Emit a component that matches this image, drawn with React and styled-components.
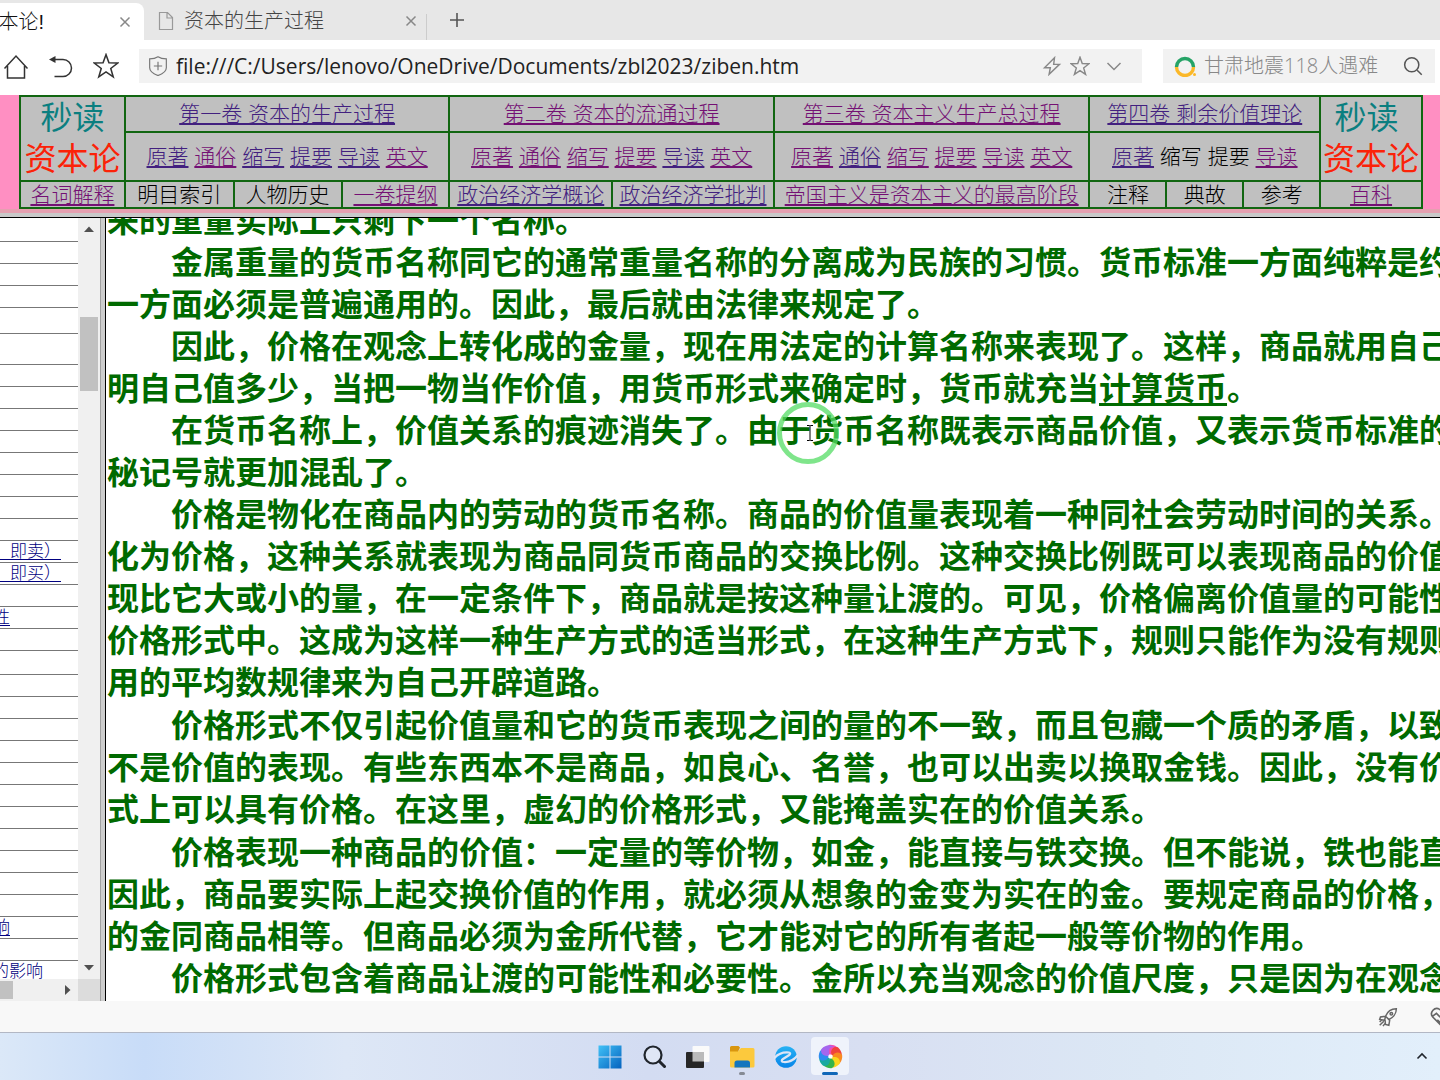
import React from 'react';
import styled, { createGlobalStyle } from 'styled-components';

const sans = `'Liberation Sans', 'Noto Sans CJK SC', sans-serif`;
const cjk = `'Noto Sans CJK SC', sans-serif`;

const GlobalStyle = createGlobalStyle`
    * {
        box-sizing: border-box;
    }

    body {
        margin: 0;
        overflow: hidden;
        font-family: ${sans};
    }

    button {
        border: none;
        background: none;
        padding: 0;
        cursor: pointer;
    }

    svg {
        display: block;
        flex-shrink: 0;
    }
`

const Window = styled.div`
    display: flex;
    flex-direction: column;
    height: 100vh;
    background-color: #fff;
`

/* tabs */

const TabStrip = styled.div`
    display: flex;
    height: 40px;
    flex-shrink: 0;
    background-color: #e7e7e7;
`

const Tab = styled.div`
    display: flex;
    align-items: center;
    justify-content: ${({ $active }) => $active ? 'flex-end' : 'flex-start'};
    width: ${({ $active }) => $active ? '144px' : '282px'};
    margin-top: ${({ $active }) => $active ? '3px' : '1px'};
    padding: ${({ $active }) => $active ? '0 12px' : '0 8px 0 12px'};
    background-color: ${({ $active }) => $active ? '#fff' : 'transparent'};
    border-radius: 0 8px 0 0;
    overflow: hidden;
    color: #999;
`

const Divider = styled.span`
    width: 1px;
    height: 26px;
    margin-top: 14px;
    background-color: #ccc;
`

const TabTitle = styled.span`
    flex: ${({ $grow }) => $grow ? '1' : 'none'};
    margin: ${({ $grow }) => $grow ? '0 0 0 8px' : '0 74px 0 0'};
    font-family: ${sans};
    font-size: 20px;
    font-weight: 300;
    line-height: 30px;
    white-space: nowrap;
    color: ${({ $grow }) => $grow ? '#444' : '#111'};
`

const IconButton = styled.button`
    display: flex;
    align-items: center;
    justify-content: center;
    width: ${({ $size }) => $size || 20}px;
    height: ${({ $size }) => $size || 20}px;
    flex-shrink: 0;
    color: ${({ $color }) => $color || '#888'};
`

const NewTab = styled(IconButton)`
    margin: 4px 0 0 14px;
`

/* toolbar */

const Toolbar = styled.div`
    display: flex;
    align-items: center;
    height: 55px;
    flex-shrink: 0;
    padding: 0 5px 4px 0;
    background-color: #fff;
`

const NavButtons = styled.div`
    display: flex;
    gap: 13px;
    width: 139px;
    flex-shrink: 0;
`

const Field = styled.label`
    display: flex;
    align-items: center;
    flex: ${({ $grow }) => $grow ? '1' : '0 0 272px'};
    min-width: 0;
    gap: 8px;
    height: 34px;
    margin-left: ${({ $grow }) => $grow ? '0' : '21px'};
    padding: 0 12px 0 ${({ $grow }) => $grow ? '9px' : '11px'};
    background-color: #f2f2f2;
`

const Input = styled.input`
    flex: 1;
    width: 0;
    min-width: 0;
    padding: 0;
    border: none;
    outline: none;
    background: none;
    font-family: 'Open Sans', 'Noto Sans CJK SC', sans-serif;
    font-size: ${({ $size }) => $size}px;
    font-weight: ${({ $size }) => $size < 21 ? '300' : '400'};
    line-height: 30px;
    color: #222;

    &::placeholder {
        color: #888;
        opacity: 1;
    }
`

/* top frame */

const TopFrame = styled.header`
    flex-shrink: 0;
    padding: 0 17px 0 19px;
    background-color: #ff8fc2;
    border-bottom: 4px solid #e5a0b0;
`

const Split = styled.div`
    height: 5px;
    flex-shrink: 0;
    background-color: #c9c9c9;
    border-bottom: 1px solid #000;
`

const Menu = styled.table`
    width: 100%;
    table-layout: fixed;
    border-collapse: collapse;
    background-color: #c0c0c0;
`

const Cell = styled.td`
    height: ${({ $height }) => $height}px;
    padding: 0;
    border: 2px solid #116611;
    font-size: 21px;
    font-weight: 300;
    line-height: 24px;
    text-align: center;
    white-space: nowrap;
    color: #000;
`

const Brand = styled.div`
    font-size: 32px;
    font-weight: 400;
    line-height: 41px;
    color: ${({ $color }) => $color};
`

const MenuLink = styled.a`
    color: ${({ $fresh }) => $fresh ? '#42207f' : '#741074'};
    text-decoration: underline;
    text-decoration-thickness: 2px;
    text-underline-offset: 2px;
`

/* frames */

const Frames = styled.div`
    display: flex;
    flex: 1;
    min-height: 0;
`

const Sidebar = styled.nav`
    display: grid;
    grid-template-columns: 78px 22px;
    grid-template-rows: minmax(0, 1fr) 22px;
    flex-shrink: 0;
`

const Outline = styled.ul`
    margin: 0;
    padding: 0;
    overflow: hidden;
    list-style: none;
`

const OutlineRow = styled.li`
    display: flex;
    align-items: flex-start;
    justify-content: flex-end;
    height: ${({ $height }) => $height}px;
    padding-right: ${({ $end }) => $end}px;
    border-bottom: 1px solid #777;
`

const OutlineLink = styled.a`
    flex-shrink: 0;
    font-family: ${cjk};
    font-size: 17px;
    font-weight: 300;
    line-height: 18px;
    white-space: pre;
    color: #000080;
    text-decoration: ${({ $plain }) => $plain ? 'none' : 'underline'};
    text-underline-offset: 2px;
`

const VTrack = styled.div`
    display: flex;
    flex-direction: column;
    align-items: center;
    justify-content: space-between;
    padding: 8px 0;
    background-color: #f0f0f0;
    color: #505050;
`

const VThumb = styled.div`
    width: 18px;
    height: 74px;
    margin: 85px 0 auto;
    background-color: #c1c1c1;
`

const HTrack = styled.div`
    display: flex;
    align-items: center;
    justify-content: space-between;
    padding-right: 7px;
    background-color: #f0f0f0;
    color: #505050;
`

const HThumb = styled.div`
    width: 13px;
    height: 18px;
    background-color: #c1c1c1;
`

const Corner = styled.div`
    background-color: #dcdcdc;
`

const Sash = styled.div`
    width: 6px;
    flex-shrink: 0;
    background-color: #cdcdcd;
    border-left: 1px solid #a0a0a0;
    border-right: 1px solid #000;
`

const Article = styled.main`
    position: relative;
    flex: 1;
    min-width: 0;
    overflow: hidden;
    padding-left: 1px;
`

const Chapter = styled.section`
    margin-top: ${({ $first }) => $first ? '-21px' : '1px'};
`

const Paragraph = styled.p`
    margin: 0;
    font-family: ${cjk};
    font-size: 32px;
    font-weight: bold;
    line-height: 42px;
    white-space: nowrap;
    text-indent: ${({ $cont }) => $cont ? '0' : '64px'};
    color: #006a00;

    u {
        text-decoration-thickness: 3px;
        text-underline-offset: 3px;
    }
`

const Pointer = styled.div`
    position: absolute;
    top: 184px;
    left: 671px;
    width: 62px;
    height: 62px;
    display: flex;
    align-items: center;
    justify-content: center;
    padding-left: 4px;
    border: 5px solid rgba(84, 220, 100, .75);
    border-radius: 50%;
`

/* bottom */

const StatusBar = styled.footer`
    display: flex;
    align-items: center;
    justify-content: flex-end;
    gap: 32px;
    height: 32px;
    flex-shrink: 0;
    overflow: hidden;
    background-color: #f8f8f8;
    border-bottom: 1px solid #b2b7c4;
    color: #666;
`

const Clipped = styled.div`
    width: 10px;
    overflow: hidden;
`

const Taskbar = styled.div`
    display: grid;
    grid-template-columns: 1fr auto 1fr;
    align-items: center;
    height: 47px;
    flex-shrink: 0;
    padding-bottom: 2px;
    background: linear-gradient(90deg, #dbe8f8 0%, #c8dcf8 10%, #dde7f6 24%, #d3dcf2 45%, #d8dff2 60%, #dce8f5 80%, #e2effb 100%);
`

const Apps = styled.div`
    display: flex;
    grid-column: 2;
    gap: 6px;
`

const AppButton = styled.button`
    display: flex;
    flex-direction: column;
    align-items: center;
    justify-content: flex-end;
    gap: 3px;
    width: 38px;
    height: 38px;
    border-radius: 4px;
    background-color: ${({ $active }) => $active ? '#eff3fb' : 'transparent'};

    &::after {
        content: '';
        width: ${({ $active }) => $active ? '16px' : '6px'};
        height: 3px;
        border-radius: 2px;
        background-color: ${({ $active, $open }) => $active ? '#1067b8' : $open ? '#858a94' : 'transparent'};
    }
`

const Tray = styled.div`
    display: flex;
    justify-content: flex-end;
    padding-right: 8px;
`

const Line = ({ size = 20, box = 24, w = 1.5, children }) => (
    <svg width={size} height={size} viewBox={`0 0 ${box} ${box}`} fill="none" stroke="currentColor" strokeWidth={w}>
        {children}
    </svg>
)

const Close = () => <Line size={12} box={12} w={1.5}><path d="M1.5 1.5l9 9M10.5 1.5l-9 9" /></Line>
const Star = ({ size, w }) => <Line size={size} w={w}><path d="M12 1.500l2.700 7.600 8.100.2-6.400 5 2.300 7.800-6.700-4.600-6.700 4.600 2.300-7.800-6.400-5 8.100-.2z" /></Line>

const columns = [105, 109, 108, 108, 163, 162, 316, 77, 77, 77, 102];

const volumes = [
    { title: '第一卷 资本的生产过程', span: 3, fresh: true, items: '原著* 通俗 缩写* 提要* 导读* 英文' },
    { title: '第二卷 资本的流通过程', span: 2, items: '原著 通俗 缩写 提要 导读* 英文' },
    { title: '第三卷 资本主义生产总过程', span: 1, items: '原著 通俗* 缩写 提要 导读 英文' },
    { title: '第四卷 剩余价值理论', span: 3, fresh: true, items: '原著* 缩写- 提要- 导读' },
];

const extras = ['名词解释', '明目索引-', '人物历史-', '一卷提纲', '政治经济学概论*', '政治经济学批判*', '帝国主义是资本主义的最高阶段', '注释-', '典故-', '参考-', '百科'];

const outline = [
    [24], [22], [22], [22], [26], [31], [22], [22], [22], [22], [22], [22], [22], [22],
    [22, '　即卖）', 17], [22, '　即买）', 17], [22], [22, '可能性', 68], [22], [24],
    [22], [22], [22], [22], [22], [22], [22], [22], [22], [22],
    [22, '影响', 68], [22], [22, '的影响', 35, true],
];

// the outline keeps one blank row between the two groups of entries
outline.splice(20, 0, [22]);

const chapters = [
    [
        ['来的重量实际上只剩下一个名称。'],
        ['金属重量的货币名称同它的通常重量名称的分离成为民族的习惯。货币标准一方面纯粹是约', '一方面必须是普遍通用的。因此，最后就由法律来规定了。'],
        ['因此，价格在观念上转化成的金量，现在用法定的计算名称来表现了。这样，商品就用自己', <>明自己值多少，当把一物当作价值，用货币形式来确定时，货币就充当<u>计算货币</u>。</>],
        ['在货币名称上，价值关系的痕迹消失了。由于货币名称既表示商品价值，又表示货币标准的', '秘记号就更加混乱了。'],
        ['价格是物化在商品内的劳动的货币名称。商品的价值量表现着一种同社会劳动时间的关系。', '化为价格，这种关系就表现为商品同货币商品的交换比例。这种交换比例既可以表现商品的价值', '现比它大或小的量，在一定条件下，商品就是按这种量让渡的。可见，价格偏离价值量的可能性', '价格形式中。这成为这样一种生产方式的适当形式，在这种生产方式下，规则只能作为没有规则', '用的平均数规律来为自己开辟道路。'],
    ],
    [
        ['价格形式不仅引起价值量和它的货币表现之间的量的不一致，而且包藏一个质的矛盾，以致', '不是价值的表现。有些东西本不是商品，如良心、名誉，也可以出卖以换取金钱。因此，没有价', '式上可以具有价格。在这里，虚幻的价格形式，又能掩盖实在的价值关系。'],
    ],
    [
        ['价格表现一种商品的价值：一定量的等价物，如金，能直接与铁交换。但不能说，铁也能直', '因此，商品要实际上起交换价值的作用，就必须从想象的金变为实在的金。要规定商品的价格，', '的金同商品相等。但商品必须为金所代替，它才能对它的所有者起一般等价物的作用。'],
        ['价格形式包含着商品让渡的可能性和必要性。金所以充当观念的价值尺度，只是因为在观念'],
    ],
];

// trailing * = other link colour, trailing - = plain text
const Entry = ({ text }) => {
    const label = text.replace(/[*-]$/, '');
    if (text.endsWith('-')) return label;
    return <MenuLink href="#" $fresh={text.endsWith('*')}>{label}</MenuLink>;
}

const BrandCell = ({ tail }) => (
    <Cell rowSpan={2}>
        <Brand $color="#0b7f80">秒读{tail && '\u00a0'}</Brand>
        <Brand $color="#fb2208">资本论</Brand>
    </Cell>
)

const Browser = () => (
    <>
        <TabStrip>
            <Tab $active>
                <TabTitle>秒读资本论!</TabTitle>
                <IconButton $size={14} aria-label="关闭"><Close /></IconButton>
            </Tab>
            <Tab>
                <Line size={20} box={20} w={1.2}><path d="M3.500 1.500h8l5 5v12h-13zM11 2v5h5" /></Line>
                <TabTitle $grow>资本的生产过程</TabTitle>
                <IconButton $size={14} aria-label="关闭"><Close /></IconButton>
            </Tab>
            <Divider />
            <NewTab $size={32} $color="#555" aria-label="新标签页">
                <Line size={16} box={16} w={1.6}><path d="M8 1v14M1 8h14" /></Line>
            </NewTab>
        </TabStrip>
        <Toolbar>
            <NavButtons>
                <IconButton $size={32} $color="#333" aria-label="主页">
                    <Line size={26} box={26}><path d="M1.500 15.500L13 3l11.500 12.500M4.500 13v12h17V13" /></Line>
                </IconButton>
                <IconButton $size={32} $color="#333" aria-label="撤销">
                    <Line size={26} box={26}><path d="M4 6.500h11a8.500 8.500 0 0 1 0 17H6.500" /><path d="M7.500 3v7L1 6.500z" fill="currentColor" stroke="none" /></Line>
                </IconButton>
                <IconButton $size={32} $color="#333" aria-label="收藏"><Star size={26} w={1.4} /></IconButton>
            </NavButtons>
            <Field $grow>
                <Line size={20} w={1.4}>
                    <path d="M12 1c3 2 6 2.500 10 2.500V14c0 5-5 7.500-10 9.500C7 21.500 2 19 2 14V3.500C6 3.500 9 3 12 1zM12 7v10M7 12h10" stroke="#777" />
                </Line>
                <Input aria-label="地址" $size={21} defaultValue="file:///C:/Users/lenovo/OneDrive/Documents/zbl2023/ziben.htm" />
                <IconButton aria-label="极速模式"><Line size={20} w={1.7}><path d="M15 2L3 14h7l-1.500 8L21 10h-7z" /></Line></IconButton>
                <IconButton aria-label="收藏此页"><Star size={20} w={1.7} /></IconButton>
                <IconButton $size={32} aria-label="更多"><Line size={16} box={16} w={1.5}><path d="M1.500 5L8 11.500 14.500 5" /></Line></IconButton>
            </Field>
            <Field>
                <svg width="22" height="22" viewBox="0 0 22 22" fill="none" strokeWidth="3.400">
                    <path d="M2.500 12a8.500 8.500 0 1 1 17 0" stroke="#25a366" />
                    <path d="M2.500 12a8.500 8.500 0 0 0 17 0" stroke="#fbb829" />
                    <circle cx="20.500" cy="19.500" r="1.500" fill="#fbb829" />
                </svg>
                <Input aria-label="搜索" $size={20} placeholder="甘肃地震118人遇难" />
                <IconButton $color="#555" aria-label="搜索"><Line size={20} w={1.8}><circle cx="10.500" cy="10.500" r="8.500" /><path d="M17 17l5.500 5.500" /></Line></IconButton>
            </Field>
        </Toolbar>
    </>
)

const Header = () => (
    <TopFrame>
        <Menu>
            <colgroup>
                {columns.map((width, i) => <col key={i} style={{ width: `${width / 14.04}%` }} />)}
            </colgroup>
            <tbody>
                <tr>
                    <BrandCell />
                    {volumes.map(v => (
                        <Cell key={v.title} colSpan={v.span} $height={36}>
                            <MenuLink href="#" $fresh={v.fresh}>{v.title}</MenuLink>
                        </Cell>
                    ))}
                    <BrandCell tail />
                </tr>
                <tr>
                    {volumes.map(v => (
                        <Cell key={v.title} colSpan={v.span} $height={49}>
                            {v.items.split(' ').map((item, i) => (
                                <React.Fragment key={item}>{i > 0 && ' '}<Entry text={item} /></React.Fragment>
                            ))}
                        </Cell>
                    ))}
                </tr>
                <tr>
                    {extras.map(item => <Cell key={item} $height={27}><Entry text={item} /></Cell>)}
                </tr>
            </tbody>
        </Menu>
    </TopFrame>
)

const Side = () => (
    <Sidebar>
        <Outline>
            {outline.map(([height, text, end, plain], i) => (
                <OutlineRow key={i} $height={height} $end={end || 0}>
                    {text && <OutlineLink href="#" $plain={plain}>{text}</OutlineLink>}
                </OutlineRow>
            ))}
        </Outline>
        <VTrack>
            <svg width="10" height="6" viewBox="0 0 10 6" fill="currentColor"><path d="M0 6l5-5.500L10 6z" /></svg>
            <VThumb />
            <svg width="10" height="6" viewBox="0 0 10 6" fill="currentColor"><path d="M0 0l5 5.500L10 0z" /></svg>
        </VTrack>
        <HTrack>
            <HThumb />
            <svg width="6" height="10" viewBox="0 0 6 10" fill="currentColor"><path d="M0 0l5.500 5L0 10z" /></svg>
        </HTrack>
        <Corner />
    </Sidebar>
)

const Reader = () => (
    <Article>
        {chapters.map((paragraphs, c) => (
            <Chapter key={c} $first={c === 0}>
                {paragraphs.map((lines, p) => (
                    <Paragraph key={p} $cont={c === 0 && p === 0}>
                        {lines.map((line, i) => (
                            <React.Fragment key={i}>{i > 0 && <br />}{line}</React.Fragment>
                        ))}
                    </Paragraph>
                ))}
            </Chapter>
        ))}
        <Pointer>
            <svg width="8" height="16" viewBox="0 0 8 16" fill="none" stroke="#000" strokeWidth="1"><path d="M1 .5h2.500l.5.500.500-.500H7M4 1v14M1 15.500h2.500l.5-.500.500.500H7" /></svg>
        </Pointer>
    </Article>
)

const petals = ['#f24bb0', '#f0433b', '#f98a20', '#fbd51e', '#34b44a', '#19a9a0', '#2f8cf0', '#a566ee'];

const Bottom = () => (
    <>
        <StatusBar>
            <IconButton $color="#666" aria-label="加速">
                <Line size={20} w={1.8}>
                    <path d="M9 11c2-5 6-9 13-9 0 6-4 11-9 13zM9 11l5 5-1 6-4-1-.500-5M9 11l-6 1-1 3 6 1zM7 17l-5 5M5 15l-3 3M9 19l-3 4" />
                    <circle cx="16" cy="8" r="1.500" />
                </Line>
            </IconButton>
            <Clipped>
                <Line size={22} w={1.8}><path d="M12 21L3 12C-1 7 5 0 11 4l1 1 1-1c6-4 12 3 8 8zM3 11l4-3 4 4 3-3M8 15l4 4" /></Line>
            </Clipped>
        </StatusBar>
        <Taskbar>
            <Apps>
                <AppButton aria-label="开始">
                    <svg width="24" height="24" viewBox="0 0 24 24">
                        <defs>
                            <linearGradient id="win" x1="0" y1="0" x2="24" y2="24" gradientUnits="userSpaceOnUse">
                                <stop stopColor="#42c3f8" />
                                <stop offset="1" stopColor="#0460bd" />
                            </linearGradient>
                        </defs>
                        <path fill="url(#win)" d="M.5.500h11v11H.5zM12.500.500h11v11h-11zM.5 12.500h11v11H.5zM12.500 12.500h11v11h-11z" />
                    </svg>
                </AppButton>
                <AppButton aria-label="搜索">
                    <svg width="24" height="24" viewBox="0 0 24 24" fill="none" stroke="#20252c" strokeLinecap="round">
                        <circle cx="11" cy="10" r="8.500" strokeWidth="2.200" fill="#dfe6f5" />
                        <path d="M17.500 16.500l5 5" strokeWidth="3" />
                    </svg>
                </AppButton>
                <AppButton aria-label="任务视图">
                    <svg width="24" height="24" viewBox="0 0 24 24">
                        <rect x="6.500" y="1" width="17" height="16" rx="1" fill="#fafafa" />
                        <rect x="0" y="7" width="18" height="16" rx="1" fill="#262626" />
                        <path d="M6.500 7H18v9.500H6.500z" fill="#bababa" />
                    </svg>
                </AppButton>
                <AppButton $open aria-label="文件资源管理器">
                    <svg width="26" height="24" viewBox="0 0 26 24">
                        <path d="M1 2.500A1.500 1.500 0 0 1 2.500 1h7L11 2.500 9 7H1z" fill="#d9960f" />
                        <path d="M1 6.500h8l3-3.500h12A1.500 1.500 0 0 1 25.500 4.500V21a1.500 1.500 0 0 1-1.500 1.500H2.500A1.500 1.500 0 0 1 1 21z" fill="#fcc93d" />
                        <path d="M5.500 22.500V18a2.500 2.500 0 0 1 2.500-2.500h10.500A2.500 2.500 0 0 1 21 18v4.500z" fill="#1475be" />
                    </svg>
                </AppButton>
                <AppButton aria-label="联想浏览器">
                    <svg width="24" height="24" viewBox="0 0 24 24">
                        <defs>
                            <linearGradient id="lenovo" x1="0" y1="0" x2="0" y2="1">
                                <stop stopColor="#27b2f4" />
                                <stop offset="1" stopColor="#0784e8" />
                            </linearGradient>
                        </defs>
                        <circle cx="12" cy="12" r="10.800" fill="url(#lenovo)" />
                        <path d="M0 13.500C4 8.500 10 7 15 7.500c2 .5 1 2-.5 3L9 14c-2 1.500-1.500 3 1 3 5 .3 10-2 14-7" fill="none" stroke="#dce5f6" strokeWidth="2.200" />
                    </svg>
                </AppButton>
                <AppButton $active aria-label="浏览器">
                    <svg width="25" height="25" viewBox="0 0 26 26">
                        {petals.map((color, i) => (
                            <path key={color} fill={color} transform={`rotate(${i * 45} 13 13)`} d="M13 11.500C8 9 7 3 12 .8c6-.3 10.500 3.200 10.500 8.200-2-4-6-3.500-9.500 2.500z" />
                        ))}
                        <circle cx="13" cy="13" r="2.200" fill="#fff" />
                    </svg>
                </AppButton>
            </Apps>
            <Tray>
                <IconButton $color="#20252c" aria-label="显示隐藏的图标">
                    <Line size={12} box={12} w={1.6}><path d="M1.500 8.500L6 4l4.500 4.500" /></Line>
                </IconButton>
            </Tray>
        </Taskbar>
    </>
)

const App = () => {
    return (
        <Window lang="zh-CN">
            <GlobalStyle />
            <Browser />
            <Header />
            <Split />
            <Frames>
                <Side />
                <Sash />
                <Reader />
            </Frames>
            <Bottom />
        </Window>
    )
}

export default App;
